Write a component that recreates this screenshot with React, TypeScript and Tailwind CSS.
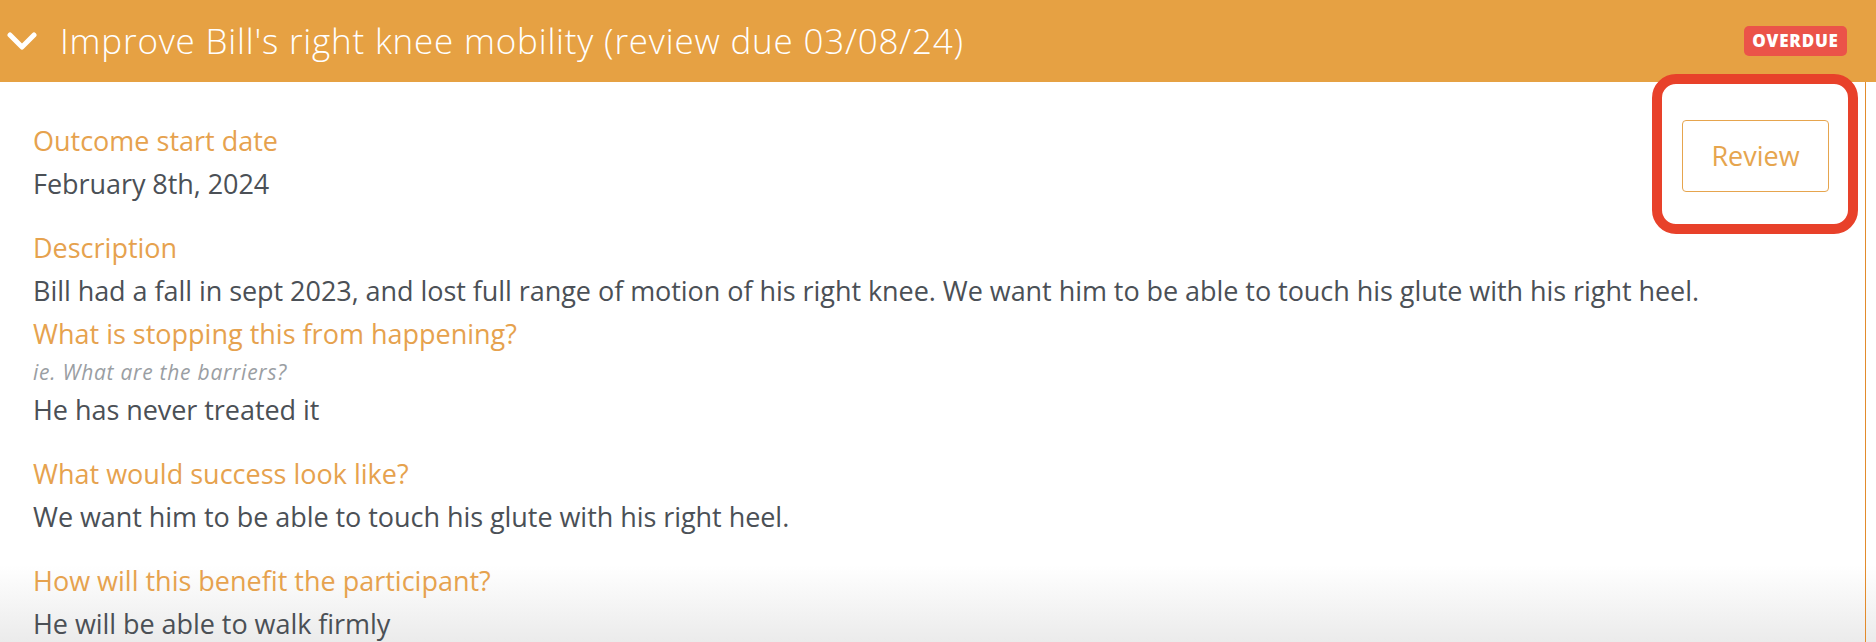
import React from 'react';

const sections = [
  { label: 'Outcome start date', value: 'February 8th, 2024' },
  {
    label: 'Description',
    value:
      'Bill had a fall in sept 2023, and lost full range of motion of his right knee. We want him to be able to touch his glute with his right heel.',
  },
  { label: 'What is stopping this from happening?', hint: 'ie. What are the barriers?', value: 'He has never treated it' },
  { label: 'What would success look like?', value: 'We want him to be able to touch his glute with his right heel.' },
  { label: 'How will this benefit the participant?', value: 'He will be able to walk firmly' },
];

export default function App() {
  return (
    <div className="w-[1876px] h-[642px] overflow-hidden bg-[linear-gradient(to_bottom,#ffffff_565px,#EBEBEB_642px)] font-['Open_Sans',sans-serif]">
      {/* Header */}
      <div className="flex h-[82px] items-center bg-[#E6A143] pl-[7px] pr-[29px]">
        <svg width="30" height="19" viewBox="0 0 30 19" className="shrink-0">
          <path d="M3 3 L15 15 L27 3" fill="none" stroke="white" strokeWidth="5" strokeLinecap="round" strokeLinejoin="round" />
        </svg>
        <h1 className="ml-[23px] text-[35px] font-light tracking-[0.8px] text-white">
          Improve Bill's right knee mobility (review due 03/08/24)
        </h1>
        <span className="ml-auto flex h-[30px] w-[103px] items-center justify-center rounded-[5px] bg-[#EB5349] text-[17px] font-extrabold tracking-[0.8px] text-white">
          OVERDUE
        </span>
      </div>

      {/* Body */}
      <div className="mr-[10px] h-[560px] border-r-[1.5px] border-[#E38B2C]">
        {/* Review button, highlighted */}
        <div className="float-right -mt-[8px] mr-[7px]">
          <div className="rounded-[24px] border-[10px] border-[#E8412A] pl-[20px] pr-[19px] pt-[36px] pb-[32px]">
            <button className="flex h-[72px] w-[147px] items-center justify-center rounded-[4px] border border-[#E6A54E] bg-white text-[27px] text-[#E6A54E]">
              Review
            </button>
          </div>
        </div>

        <div className="pl-[33px] pt-[41px]">
          {sections.map((s, i) => (
            <div key={s.label} className={i === 0 ? '' : i === 2 ? 'mt-[7px]' : 'mt-[28px]'}>
              <div className="text-[27px] leading-[36px] text-[#E6A24E]">{s.label}</div>
              {s.hint && (
                <div className="mt-[6px] text-[21px] italic leading-[28px] tracking-[0.75px] text-[#9A9EA3]">{s.hint}</div>
              )}
              <div className={`${s.hint ? 'mt-[6px]' : 'mt-[7px]'} text-[27px] leading-[36px] tracking-[-0.05px] text-[#4B5056]`}>{s.value}</div>
            </div>
          ))}
        </div>
      </div>
    </div>
  );
}
